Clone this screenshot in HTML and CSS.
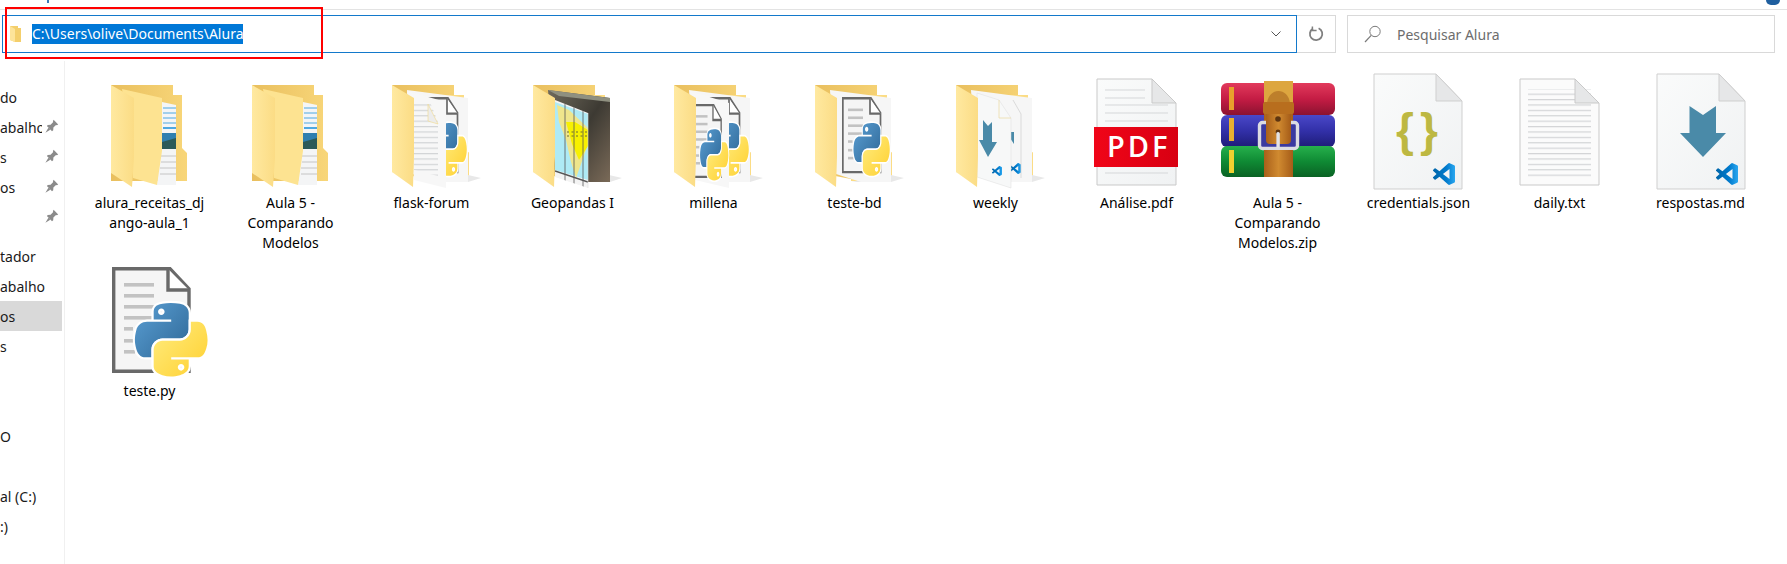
FILE: index.html
```html
<!DOCTYPE html>
<html lang="pt-BR">
<head>
  <meta charset="UTF-8">
  <meta name="viewport" content="width=device-width, initial-scale=1.0">
  <title>Alura</title>
  <link rel="stylesheet" href="styles.css">
</head>
<body>

  <!-- shared icon parts -->
  <svg class="defs" aria-hidden="true">
    <defs>
      <linearGradient id="gLeaf" x1="0" x2="1" y1="0" y2="0">
        <stop offset="0" stop-color="#ffe9a0"/><stop offset="1" stop-color="#fbdc85"/>
      </linearGradient>
      <linearGradient id="gTab" x1="0" x2="1" y1="0" y2="0">
        <stop offset="0" stop-color="#e9bf5e"/><stop offset="1" stop-color="#f8d679"/>
      </linearGradient>
      <linearGradient id="gBlue" gradientUnits="userSpaceOnUse" x1="0" y1="0" x2="85" y2="75">
        <stop offset="0" stop-color="#5a9fd4"/><stop offset="1" stop-color="#306998"/>
      </linearGradient>
      <linearGradient id="gYellow" gradientUnits="userSpaceOnUse" x1="35" y1="50" x2="95" y2="105">
        <stop offset="0" stop-color="#ffe873"/><stop offset="1" stop-color="#ffd43b"/>
      </linearGradient>
      <linearGradient id="gVs" x1="0" x2="1" y1="0" y2="0">
        <stop offset="0" stop-color="#0065a9"/><stop offset=".6" stop-color="#007acc"/><stop offset="1" stop-color="#2aa7f0"/>
      </linearGradient>
      <linearGradient id="gPaper" x1="0" x2="1" y1="0" y2="1">
        <stop offset="0" stop-color="#fafbfb"/><stop offset="1" stop-color="#f0f2f3"/>
      </linearGradient>
      <linearGradient id="gRed" x1="0" x2="1" y1="0" y2="0">
        <stop offset="0" stop-color="#f00518"/><stop offset="1" stop-color="#d80012"/>
      </linearGradient>
      <linearGradient id="gBookR" x1="0" x2="0" y1="0" y2="1">
        <stop offset="0" stop-color="#e23a5c"/><stop offset=".5" stop-color="#c41c44"/><stop offset="1" stop-color="#8c1230"/>
      </linearGradient>
      <linearGradient id="gBookB" x1="0" x2="0" y1="0" y2="1">
        <stop offset="0" stop-color="#4a48c8"/><stop offset=".5" stop-color="#3230a8"/><stop offset="1" stop-color="#1e1c78"/>
      </linearGradient>
      <linearGradient id="gBookG" x1="0" x2="0" y1="0" y2="1">
        <stop offset="0" stop-color="#26b04c"/><stop offset=".5" stop-color="#0f8a34"/><stop offset="1" stop-color="#0a6224"/>
      </linearGradient>
      <linearGradient id="gBelt" x1="0" x2="1" y1="0" y2="0">
        <stop offset="0" stop-color="#a9601a"/><stop offset=".5" stop-color="#d08a30"/><stop offset="1" stop-color="#a55c18"/>
      </linearGradient>
      <linearGradient id="gPhoto" x1="0" x2="1" y1="0" y2="1">
        <stop offset="0" stop-color="#6f6a5c"/><stop offset=".5" stop-color="#3d3a33"/><stop offset="1" stop-color="#7a6a58"/>
      </linearGradient>
      <pattern id="pLines" width="10" height="5.4" patternUnits="userSpaceOnUse">
        <rect width="10" height="1.2" fill="#d2d4d6"/>
      </pattern>
      <clipPath id="cMap"><polygon points="46,28 79,41 79,116 46,105"/></clipPath>

      <symbol id="py" viewBox="-6 -6 122.4 122" overflow="visible">
        <g stroke="#fff" stroke-width="7" paint-order="stroke">
          <path fill="url(#gBlue)" d="M54.9 0C50.3 0 46 .4 42.1 1.1 30.8 3.1 28.7 7.3 28.7 15v10.2h26.8v3.4H18.6c-7.8 0-14.6 4.7-16.7 13.6-2.5 10.2-2.6 16.6 0 27.3C3.8 77.4 8.3 83 16.1 83h9.2V70.8c0-8.8 7.7-16.7 16.8-16.7h26.8c7.4 0 13.4-6.1 13.4-13.6V15c0-7.3-6.1-12.7-13.4-13.9C64.3.3 59.5 0 54.9 0zM40.4 8.2c2.8 0 5 2.3 5 5.1s-2.2 5.1-5 5.1-5-2.3-5-5.1 2.2-5.1 5-5.1z"/>
          <path fill="url(#gYellow)" d="M85.6 28.7v11.9c0 9.2-7.8 17-16.7 17H42.1c-7.3 0-13.4 6.3-13.4 13.6v25.5c0 7.3 6.3 11.5 13.4 13.6 8.5 2.5 16.6 2.9 26.8 0 6.8-2 13.4-5.9 13.4-13.6V86.5H55.5v-3.4h40.2c7.8 0 10.7-5.4 13.4-13.6 2.8-8.4 2.7-16.5 0-27.3-1.9-7.8-5.6-13.6-13.4-13.6zM70.6 93.3c2.8 0 5 2.3 5 5.1s-2.2 5.1-5 5.1-5-2.3-5-5.1 2.2-5.1 5-5.1z"/>
        </g>
      </symbol>

      <symbol id="vs" viewBox="0 0 24 24">
        <path fill="url(#gVs)" d="M23.15 2.59 18.21.21a1.49 1.49 0 0 0-1.7.29L7.05 9.13 2.93 6a1 1 0 0 0-1.28.06L.33 7.26a1 1 0 0 0 0 1.48L3.9 12 .33 15.26a1 1 0 0 0 0 1.48l1.32 1.2a1 1 0 0 0 1.28.06l4.12-3.13 9.46 8.63a1.49 1.49 0 0 0 1.7.29l4.94-2.38A1.5 1.5 0 0 0 24 20.06V3.94a1.5 1.5 0 0 0-.85-1.35zM18 17.45 10.83 12 18 6.55z"/>
      </symbol>

      <symbol id="pydoc" viewBox="0 0 128 120" overflow="visible">
        <path d="M27.700 8.700H84L103 29V111.300H27.700Z" fill="#f5f5f5" stroke="#696969" stroke-width="3.4"/>
        <path d="M82 9V30H103" fill="#fff" stroke="#696969" stroke-width="3.4"/>
        <g fill="#c2c2c2">
          <rect x="38" y="23" width="30" height="3.6"/><rect x="38" y="34" width="30" height="3.6"/>
          <rect x="38" y="45" width="30" height="3.6"/><rect x="38" y="56" width="30" height="3.6"/>
          <rect x="38" y="67" width="9" height="3.6"/><rect x="38" y="79" width="9" height="3.6"/>
          <rect x="38" y="90" width="11" height="3.6"/>
        </g>
        <use href="#py" x="45" y="39" width="80" height="80"/>
      </symbol>

      <symbol id="folderBack" viewBox="0 0 128 120" overflow="visible">
        <path d="M24 13H86V23H96V76L101 81V109H70L24 100Z" fill="url(#gTab)"/>
        <path d="M60 23H96V76L101 81V109H60Z" fill="#fbdc85"/>
      </symbol>
      <symbol id="folderFront" viewBox="0 0 128 120" overflow="visible">
        <path d="M24 13 46 26V85L45 115 24 100Z" fill="url(#gLeaf)"/>
      </symbol>
      <symbol id="sheetBack" viewBox="0 0 128 120" overflow="visible">
        <path d="M60 110H100L113 106 100 103Z" fill="#e8e8e8"/>
        <path d="M39 18 100 26V110H70L45 102Z" fill="#f6f6f6"/>
      </symbol>
      <symbol id="pin" viewBox="0 0 14 14">
        <path d="M8.6.8 13.2 5.4 11.9 6.2 11 5.9 8.4 8.5 8.2 11.3 7 12.2 1.9 7.1 2.8 5.9 5.6 5.7 8.2 3.1 7.9 2.2Z M3.4 8.8 .4 13.7 5.3 10.7Z" fill="#8b8b8b"/>
      </symbol>
    </defs>
  </svg>

  <div class="titlebar">
    <span class="titlebar-mark"></span>
    <span class="help-dot"></span>
  </div>

  <div class="toolbar">
    <div class="address">
      <svg class="address-icon" viewBox="0 0 12 16">
        <path d="M0 0H8V2H11V16H5L0 14Z" fill="#f4cf6c"/>
        <path d="M0 0 5 3V16L0 14Z" fill="#fde49a"/>
      </svg>
      <span class="address-path">C:\Users\olive\Documents\Alura</span>
      <svg class="chevron" viewBox="0 0 10 6"><path d="M.5.5 5 5 9.5.5" fill="none" stroke="#555" stroke-width="1"/></svg>
    </div>
    <div class="refresh">
      <svg viewBox="0 0 16 16" class="refresh-icon">
        <path d="M10.6 2.3A6.2 6.2 0 1 1 5 2.6" fill="none" stroke="#808080" stroke-width="1.8"/>
        <path d="M4.4 .4V4.6H8.6" fill="none" stroke="#808080" stroke-width="1.5"/>
      </svg>
    </div>
    <div class="search">
      <svg class="search-icon" viewBox="0 0 18 18">
        <circle cx="11" cy="6.5" r="5.2" fill="none" stroke="#7a7a7a" stroke-width="1"/>
        <path d="M7.2 10.4 1 17" stroke="#7a7a7a" stroke-width="1.2"/>
      </svg>
      <span>Pesquisar Alura</span>
    </div>
  </div>

  <div class="red-box"></div>

  <div class="main">
    <nav class="sidebar">
      <div class="nav-row">do</div>
      <div class="nav-row"><span class="nav-text">abalho</span><svg class="pin"><use href="#pin"/></svg></div>
      <div class="nav-row"><span class="nav-text">s</span><svg class="pin"><use href="#pin"/></svg></div>
      <div class="nav-row"><span class="nav-text">os</span><svg class="pin"><use href="#pin"/></svg></div>
      <div class="nav-row"><span class="nav-text"></span><svg class="pin"><use href="#pin"/></svg></div>
      <div class="nav-row nav-section">tador</div>
      <div class="nav-row">abalho</div>
      <div class="nav-row selected">os</div>
      <div class="nav-row">s</div>
      <div class="nav-row"></div>
      <div class="nav-row"></div>
      <div class="nav-row">O</div>
      <div class="nav-row"></div>
      <div class="nav-row">al (C:)</div>
      <div class="nav-row">:)</div>
    </nav>

    <div class="files">

      <div class="file">
        <svg class="thumb" viewBox="0 0 128 120">
          <path d="M25 13H87V23H96V76L101 81V109H25Z" fill="url(#gTab)"/>
          <path d="M76 30 90 33V113H71Z" fill="#f4f5f6"/>
          <g stroke="#4fa8e0" stroke-width="1"><path d="M77 36H90M77 41H90M77 46H90M77 51H90"/><path d="M77 56H90" stroke-width="2"/></g>
          <path d="M76 61H90V77H76Z" fill="#2f7fb0"/><path d="M76 70 90 66V77H76Z" fill="#2c5a58"/>
          <path d="M75 84H90M75 90H90M74 96H90M74 102H90" stroke="#c4c4c4" stroke-width="1"/>
          <path d="M36 17 76 26V79L71 113 47 106V87Z" fill="#fde391"/>
          <path d="M25 13 48 26V86L46 115 25 101Z" fill="url(#gLeaf)"/>
        </svg>
        <div class="file-name">alura_receitas_django-aula_1</div>
      </div>

      <div class="file">
        <svg class="thumb" viewBox="0 0 128 120">
          <path d="M25 13H87V23H96V76L101 81V109H25Z" fill="url(#gTab)"/>
          <path d="M76 30 90 33V113H71Z" fill="#f4f5f6"/>
          <g stroke="#4fa8e0" stroke-width="1"><path d="M77 36H90M77 41H90M77 46H90M77 51H90"/><path d="M77 56H90" stroke-width="2"/></g>
          <path d="M76 61H90V77H76Z" fill="#2f7fb0"/><path d="M76 70 90 66V77H76Z" fill="#2c5a58"/>
          <path d="M75 84H90M75 90H90M74 96H90M74 102H90" stroke="#c4c4c4" stroke-width="1"/>
          <path d="M36 17 76 26V79L71 113 47 106V87Z" fill="#fde391"/>
          <path d="M25 13 48 26V86L46 115 25 101Z" fill="url(#gLeaf)"/>
        </svg>
        <div class="file-name">Aula 5 - Comparando Modelos</div>
      </div>

      <div class="file">
        <svg class="thumb" viewBox="0 0 128 120">
          <use href="#folderBack"/>
          <use href="#sheetBack"/>
          <use href="#pydoc" transform="translate(38 20) scale(.5 .72)" width="128" height="120"/>
          <path d="M39 19 78 30V116L46 108Z" fill="#f7f7f7"/>
          <path d="M46 30H62L70 50V104L46 98Z" fill="url(#pLines)"/>
          <path d="M60 32 70 52 60 49Z" fill="#ececec" stroke="#f0dc9a" stroke-width=".7"/>
          <use href="#folderFront"/>
        </svg>
        <div class="file-name">flask-forum</div>
      </div>

      <div class="file">
        <svg class="thumb" viewBox="0 0 128 120">
          <use href="#folderBack"/>
          <path d="M60 110H101L113 106 100 103Z" fill="#e8e8e8"/>
          <path d="M39 18 101 26V110H70L46 102Z" fill="url(#gPhoto)"/>
          <path d="M39 18 101 26V30L50 24Z" fill="#8f9080"/>
          <path d="M46 28 79 41V116L46 105Z" fill="#f4f4f4"/>
          <g clip-path="url(#cMap)">
            <path d="M46 30 79 42V108L46 98Z" fill="#aeeaf5"/>
            <path d="M48 33 60 38 79 56V72L72 92 67 106 62 90 57 68 50 50Z" fill="#efe68c"/>
            <path d="M57 50 66 50 79 58V74L70 88 63 72Z" fill="#f7f000"/>
            <path d="M58 60H79M58 64H79" stroke="#6d6a30" stroke-width="1" stroke-dasharray="2 2.500"/>
            <path d="M56 30V110M65 34V112M74 38V116" stroke="#555" stroke-width=".8"/>
            <path d="M46 99 79 110" stroke="#555" stroke-width="1.6"/>
          </g>
          <path d="M79 41V116" stroke="#ddd" stroke-width=".6"/>
          <use href="#folderFront"/>
        </svg>
        <div class="file-name">Geopandas I</div>
      </div>

      <div class="file">
        <svg class="thumb" viewBox="0 0 128 120">
          <use href="#folderBack"/>
          <use href="#sheetBack"/>
          <use href="#pydoc" transform="translate(38 20) scale(.5 .72)" width="128" height="120"/>
          <path d="M40 19 79 31V116L45 108Z" fill="#f7f7f7"/>
          <use href="#pydoc" transform="translate(31 27) scale(.39 .7)" width="128" height="120"/>
          <use href="#folderFront"/>
        </svg>
        <div class="file-name">millena</div>
      </div>

      <div class="file">
        <svg class="thumb" viewBox="0 0 128 120">
          <use href="#folderBack"/>
          <use href="#sheetBack"/>
          <use href="#pydoc" transform="translate(38 20) scale(.5 .72)" width="128" height="120"/>
          <use href="#folderFront"/>
        </svg>
        <div class="file-name">teste-bd</div>
      </div>

      <div class="file">
        <svg class="thumb" viewBox="0 0 128 120">
          <use href="#folderBack"/>
          <use href="#sheetBack"/>
          <path d="M74 60H82V72Z" fill="#4a8aa8"/>
          <use href="#vs" x="78" y="87" width="11" height="19"/>
          <path d="M81 28 89 42V106" fill="none" stroke="#cfcfcf" stroke-width=".7"/>
          <path d="M45 21 67 28 79 46V116L45 105Z" fill="#f7f8f8" stroke="#ddd" stroke-width=".5"/>
          <path d="M67 28V46H79" fill="none" stroke="#ecdca8" stroke-width=".8"/>
          <path d="M51 48 56 54 60 50V70H65L56 85 47 68H51Z" fill="#4a8aa8"/>
          <use href="#vs" x="60" y="92" width="10" height="14"/>
          <use href="#folderFront"/>
        </svg>
        <div class="file-name">weekly</div>
      </div>

      <div class="file">
        <svg class="thumb" viewBox="0 0 128 120">
          <path d="M24 7H79L103 31V113H24Z" fill="url(#gPaper)" stroke="#c9c9c9"/>
          <path d="M79 7V31H103Z" fill="#e6e7e8" stroke="#c9c9c9"/>
          <path d="M32 18H72M32 26H72M32 33H95M32 41H95M32 49H95M32 101H95" stroke="#d5d7d9"/>
          <rect x="21" y="55" width="84" height="40" fill="url(#gRed)"/>
          <text class="pdf-mark" x="34" y="85">PDF</text>
        </svg>
        <div class="file-name">Análise.pdf</div>
      </div>

      <div class="file">
        <svg class="thumb" viewBox="0 0 128 120">
          <rect x="7" y="11" width="114" height="32" rx="6" fill="url(#gBookR)"/>
          <rect x="7" y="43" width="114" height="32" rx="6" fill="url(#gBookB)"/>
          <rect x="7" y="74" width="114" height="31" rx="6" fill="url(#gBookG)"/>
          <rect x="15" y="15" width="5" height="23" fill="#e8a02c"/>
          <rect x="15" y="46" width="5" height="23" fill="#e8b030"/>
          <rect x="15" y="78" width="5" height="23" fill="#f0d030"/>
          <!-- correia e fivela -->
          <rect x="50" y="9" width="29" height="96" fill="url(#gBelt)"/>
          <path d="M50 9H79V31H50Z" fill="#dda63f"/>
          <path d="M53 31C55 15 74 15 76 31Z" fill="#bd7f2b"/>
          <rect x="49" y="30" width="31" height="12" rx="2" fill="#b86e1e"/>
          <rect x="45.500" y="50.500" width="38" height="26" rx="3" fill="#3b3aa0" stroke="#dcdce2" stroke-width="3.400"/>
          <path d="M52 42H77V68Q77 72 73 72H56Q52 72 52 68Z" fill="url(#gBelt)"/>
          <rect x="50" y="78" width="29" height="27" fill="url(#gBelt)"/>
          <circle cx="64" cy="47" r="2.800" fill="#5e3510"/>
          <circle cx="64" cy="60" r="2.400" fill="#5e3510"/>
          <rect x="62.400" y="60" width="3.400" height="16" rx="1.500" fill="#e2e2e6"/>
        </svg>
        <div class="file-name">Aula 5 - Comparando Modelos.zip</div>
      </div>

      <div class="file">
        <svg class="thumb" viewBox="0 0 128 120">
          <path d="M19 2H81L107 29V117H19Z" fill="url(#gPaper)" stroke="#cfcfcf"/>
          <path d="M81 2V29H107Z" fill="#e6e7e8" stroke="#cfcfcf"/>
          <text class="brace" x="41" y="74">{</text>
          <text class="brace" x="65" y="74">}</text>
          <use href="#vs" x="77" y="91" width="24" height="22"/>
        </svg>
        <div class="file-name">credentials.json</div>
      </div>

      <div class="file">
        <svg class="thumb" viewBox="0 0 128 120">
          <path d="M24 7H79L103 31V113H24Z" fill="#fbfbfb" stroke="#c9c9c9"/>
          <rect x="32" y="17" width="63" height="88" fill="url(#pLines)"/>
          <path d="M79 7V31H103Z" fill="#e6e7e8" stroke="#c9c9c9"/>
        </svg>
        <div class="file-name">daily.txt</div>
      </div>

      <div class="file">
        <svg class="thumb" viewBox="0 0 128 120">
          <path d="M20 2H82L108 29V117H20Z" fill="url(#gPaper)" stroke="#cfcfcf"/>
          <path d="M82 2V29H108Z" fill="#e6e7e8" stroke="#cfcfcf"/>
          <path d="M52.500 34 66 43 79 34V61H89L66 85 43 61H52.500Z" fill="#4a8aa8"/>
          <use href="#vs" x="79" y="91" width="22" height="22"/>
        </svg>
        <div class="file-name">respostas.md</div>
      </div>

      <div class="file">
        <svg class="thumb" viewBox="0 0 128 120"><use href="#pydoc"/></svg>
        <div class="file-name">teste.py</div>
      </div>

    </div>
  </div>

</body>
</html>
```

FILE: styles.css
```css
:root {
  --azul: #1379cb;
  --borda: #d9d9d9;
  --texto: #000;
}

* {
  box-sizing: border-box;
}

body {
  font-family: 'Noto Sans', 'Open Sans', sans-serif;
  font-size: 14px;
  color: var(--texto);
  background-color: #fff;
  margin: 0;
  height: 564px;
  overflow: hidden;
  position: relative;
}

.defs {
  position: absolute;
  width: 0;
  height: 0;
}

.titlebar {
  height: 10px;
  border-bottom: 1px solid #e3e3e3;
  display: flex;
  justify-content: space-between;
  align-items: flex-start;
  overflow: hidden;
}

.titlebar-mark {
  width: 2px;
  height: 3px;
  margin-left: 47px;
  background-color: #3a78b8;
}

.help-dot {
  width: 14px;
  height: 5px;
  margin-right: 7px;
  border-radius: 0 0 7px 7px;
  background-color: #1f5f9f;
}

.toolbar {
  display: flex;
  height: 38px;
  margin: 5px 12px 0 2px;
}

.address {
  flex: 1;
  display: flex;
  align-items: center;
  border: 1px solid var(--azul);
  padding-left: 7px;
  padding-right: 15px;
}

.address-icon {
  width: 12px;
  height: 16px;
  margin-right: 10px;
}

.address-path {
  background-color: #0078d7;
  color: #fff;
  line-height: 20px;
}

.chevron {
  width: 10px;
  height: 6px;
  margin-left: auto;
}

.refresh {
  width: 39px;
  display: flex;
  align-items: center;
  justify-content: center;
  border: 1px solid var(--borda);
  border-left: none;
}

.refresh-icon {
  width: 16px;
  height: 16px;
}

.search {
  width: 428px;
  margin-left: 11px;
  display: flex;
  align-items: center;
  gap: 15px;
  padding-left: 16px;
  border: 1px solid var(--borda);
  color: #6d6d6d;
}

.search-icon {
  width: 18px;
  height: 18px;
}

/* marcacao vermelha por cima da barra */
.red-box {
  position: absolute;
  left: 5px;
  top: 7px;
  width: 318px;
  height: 52px;
  border: 2px solid #f00;
}

.main {
  display: flex;
  margin-top: 8px;
}

.sidebar {
  width: 65px;
  height: 503px;
  border-right: 1px solid #f0f0f0;
  padding-top: 21px;
  flex-shrink: 0;
  overflow: hidden;
}

.nav-row {
  height: 30px;
  display: flex;
  align-items: center;
  margin-right: 2px;
  color: #1a1a1a;
  white-space: nowrap;
}

.nav-section {
  margin-top: 9px;
}

.nav-text {
  width: 42px;
  overflow: hidden;
}

.pin {
  width: 14px;
  height: 14px;
  margin-left: 3px;
  margin-bottom: 2px;
}

.selected {
  background-color: #d9d9d9;
}

.files {
  display: grid;
  grid-template-columns: repeat(12, 141px);
  grid-auto-rows: 188px;
  padding-top: 11px;
  padding-left: 14px;
}

.file {
  display: flex;
  flex-direction: column;
  align-items: center;
}

.thumb {
  width: 128px;
  height: 120px;
  overflow: visible;
}

.file-name {
  width: 114px;
  margin-top: 1px;
  line-height: 20px;
  text-align: center;
  overflow-wrap: anywhere;
}

.pdf-mark {
  font-family: 'Open Sans', sans-serif;
  font-size: 29px;
  font-weight: 600;
  letter-spacing: 3px;
  fill: #fff;
}

.brace {
  font-family: 'Liberation Sans', sans-serif;
  font-size: 46px;
  font-weight: 700;
  fill: #bdb842;
}
```
